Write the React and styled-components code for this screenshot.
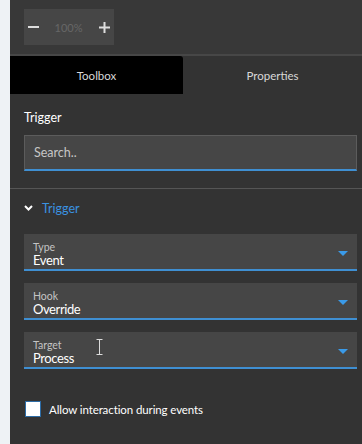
import React from "react";
import styled, { createGlobalStyle } from "styled-components";

const Global = createGlobalStyle`
  html, body { margin: 0; padding: 0; background: #eef2f5; }
  body { font-family: Lato, "Open Sans", sans-serif; }
  * { box-sizing: border-box; }
`;

const Shell = styled.div`
  display: flex;
  height: 444px;
  width: 362px;
  overflow: hidden;
`;
const Strip = styled.div`
  width: 10px;
  background: #eef2f5;
  flex: none;
`;
const Panel = styled.div`
  flex: 1;
  background: #333333;
  display: flex;
  flex-direction: column;
`;
const Toolbar = styled.div`
  height: 56px;
  flex: none;
  background: #383838;
  padding: 9px 14px;
  border-bottom: 2px solid #474747;
`;
const ZoomBox = styled.div`
  width: 90px;
  height: 36px;
  background: #464646;
  display: flex;
  align-items: center;
  justify-content: space-between;
  padding: 0 4px 0 3px;
`;
const ZoomBtn = styled.span`
  width: 12px;
  height: 12px;
  display: flex;
  align-items: center;
  justify-content: center;
`;
const ZoomText = styled.span`
  font-size: 11px;
  color: #666;
`;
const Tabs = styled.div`
  display: flex;
  height: 38px;
  flex: none;
`;
const Tab = styled.div`
  width: ${p => p.$w}px;
  flex: ${p => (p.$w ? "none" : "1")};
  background: ${p => (p.$active ? "#000" : "transparent")};
  border-top-right-radius: ${p => (p.$active ? "3px" : "0")};
  display: flex;
  align-items: center;
  justify-content: center;
  color: #d8d8d8;
  font-size: 11.5px;
`;
const Section = styled.div`
  padding: 14px 5px 17px 14px;
  border-bottom: 1px solid #555;
`;
const Heading = styled.div`
  color: #fff;
  font-size: 12.5px;
  height: 27px;
  padding-top: 2px;
`;
const Search = styled.div`
  height: 36px;
  background: #464646;
  border: 1px solid #5c5c5c;
  border-bottom: 2px solid #3f8fd2;
  display: flex;
  align-items: center;
  padding-left: 9px;
  color: #c6c6c6;
  font-size: 12.5px;
`;
const Body = styled.div`
  padding: 13px 5px 0 14px;
  display: flex;
  flex-direction: column;
`;
const GroupHeader = styled.div`
  display: flex;
  align-items: center;
  gap: 9px;
  height: 12px;
  color: #3a92e0;
  font-size: 12.5px;
  margin-bottom: 20px;
`;
const Fields = styled.div`
  display: flex;
  flex-direction: column;
  gap: 12px;
`;
const Field = styled.div`
  position: relative;
  height: 37px;
  background: #464646;
  border-bottom: 2px solid #3f8fd2;
  padding: 8px 9px 0;
  display: flex;
  flex-direction: column;
`;
const Label = styled.span`
  font-size: 10.5px;
  color: #c4c4c4;
  line-height: 11px;
`;
const Value = styled.span`
  font-size: 13px;
  letter-spacing: -0.4px;
  color: #fff;
  line-height: 15px;
`;
const Caret = styled.svg`
  position: absolute;
  right: 9px;
  top: 17px;
`;
const Cursor = styled.svg`
  position: absolute;
  left: 72px;
  top: 7px;
`;
const CheckRow = styled.label`
  display: flex;
  align-items: center;
  gap: 8px;
  margin-top: 32px;
  padding-left: 1px;
  color: #fff;
  font-size: 11.5px;
  letter-spacing: -0.1px;
`;
const Box = styled.span`
  width: 16px;
  height: 16px;
  background: #fff;
  border: 1px solid #2d6ca6;
`;

const Chevron = () => (
  <svg width="9" height="6" viewBox="0 0 9 6">
    <path d="M1 1l3.5 3.5L8 1" fill="none" stroke="#fff" strokeWidth="2" />
  </svg>
);

const SelectField = ({ label, value, cursor }) => (
  <Field>
    <Label>{label}</Label>
    <Value>{value}</Value>
    {cursor && (
      <Cursor width="7" height="16" viewBox="0 0 7 16">
        <path d="M0.5 0.5h6M0.5 15.5h6M3.5 0.5v15" stroke="#ddd" strokeWidth="1" fill="none" />
      </Cursor>
    )}
    <Caret width="10" height="5" viewBox="0 0 10 5">
      <path d="M0 0h10L5 5z" fill="#3a9ae8" />
    </Caret>
  </Field>
);

export default function App() {
  return (
    <>
      <Global />
      <Shell>
        <Strip />
        <Panel>
          <Toolbar>
            <ZoomBox>
              <ZoomBtn>
                <svg width="11" height="2" viewBox="0 0 11 2"><rect width="11" height="2" fill="#ddd" /></svg>
              </ZoomBtn>
              <ZoomText>100%</ZoomText>
              <ZoomBtn>
                <svg width="11" height="11" viewBox="0 0 11 11">
                  <rect y="4.5" width="11" height="2" fill="#ddd" />
                  <rect x="4.5" width="2" height="11" fill="#ddd" />
                </svg>
              </ZoomBtn>
            </ZoomBox>
          </Toolbar>
          <Tabs>
            <Tab $active $w={173}>Toolbox</Tab>
            <Tab>Properties</Tab>
          </Tabs>
          <Section>
            <Heading>Trigger</Heading>
            <Search>Search..</Search>
          </Section>
          <Body>
            <GroupHeader>
              <Chevron />
              <span>Trigger</span>
            </GroupHeader>
            <Fields>
              <SelectField label="Type" value="Event" />
              <SelectField label="Hook" value="Override" />
              <SelectField label="Target" value="Process" cursor />
            </Fields>
            <CheckRow>
              <Box />
              <span>Allow interaction during events</span>
            </CheckRow>
          </Body>
        </Panel>
      </Shell>
    </>
  );
}
